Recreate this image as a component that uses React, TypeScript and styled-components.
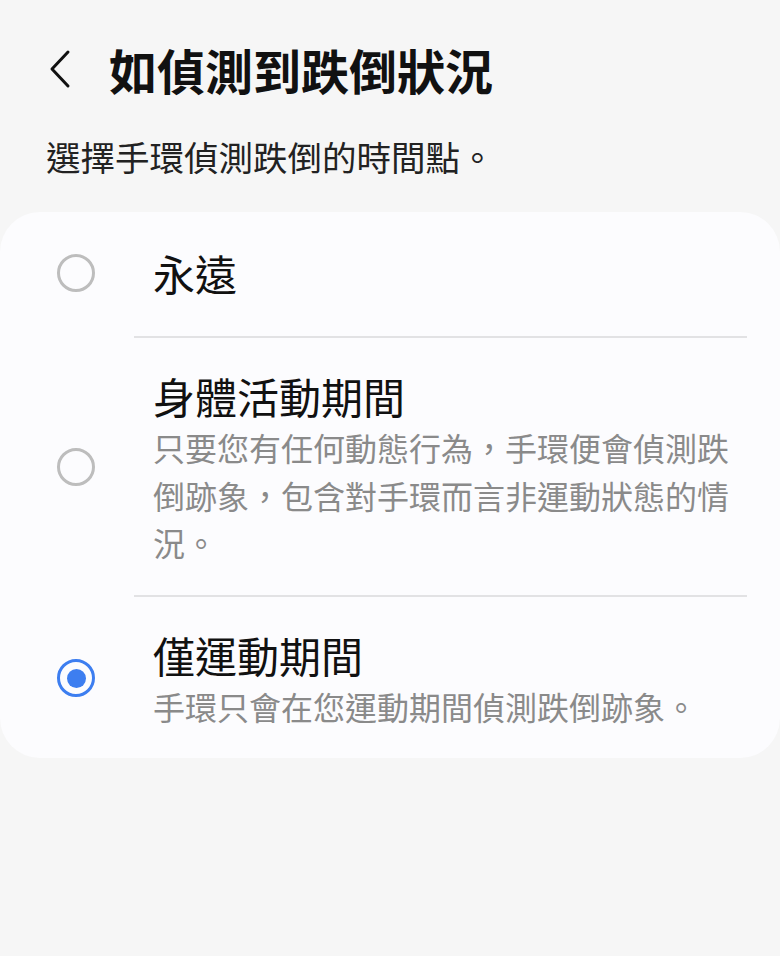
import styled, { createGlobalStyle } from "styled-components";

const GlobalStyle = createGlobalStyle`
  html, body {
    margin: 0;
    padding: 0;
    background: #f6f6f6;
  }
  body {
    font-family: "Noto Sans CJK TC", "Noto Sans", sans-serif;
    color: #111;
  }
`;

const options = [
  { title: "永遠", description: "", selected: false },
  {
    title: "身體活動期間",
    description:
      "只要您有任何動態行為，手環便會偵測跌倒跡象，包含對手環而言非運動狀態的情況。",
    selected: false,
  },
  {
    title: "僅運動期間",
    description: "手環只會在您運動期間偵測跌倒跡象。",
    selected: true,
  },
];

const Page = styled.div`
  min-height: 956px;
  background: #f6f6f6;
`;

const Header = styled.div`
  display: flex;
  align-items: center;
  gap: 37px;
  height: 60px;
  padding: 39px 0 0 48px;
`;

const BackButton = styled.div`
  display: flex;
  align-items: center;
  width: 24px;
  height: 40px;
`;

const Title = styled.h1`
  margin: 0;
  font-size: 48px;
  font-weight: 700;
  line-height: 60px;
  color: #111;
`;

const Subtitle = styled.p`
  margin: 33px 0 0;
  padding-left: 46px;
  font-size: 34.5px;
  line-height: 48px;
  color: #222;
`;

const Card = styled.div`
  margin-top: 32px;
  background: #fcfcfe;
  border-radius: 40px;
`;

const Row = styled.div<{ $single: boolean }>`
  display: flex;
  align-items: center;
  gap: 58px;
  padding: ${(p) => (p.$single ? "33px 33px 35px 57px" : "30px 33px 28px 57px")};
`;

const Radio = styled.div<{ $on: boolean }>`
  flex: none;
  box-sizing: border-box;
  width: 38px;
  height: 38px;
  border-radius: 50%;
  border: ${(p) => (p.$on ? "3.5px solid #3d7ef0" : "3px solid #bdbdbd")};
  display: flex;
  align-items: center;
  justify-content: center;

  &::after {
    content: "";
    display: ${(p) => (p.$on ? "block" : "none")};
    width: 19px;
    height: 19px;
    border-radius: 50%;
    background: #3d7ef0;
  }
`;

const TextBlock = styled.div`
  flex: 1;
  min-width: 0;
`;

const OptionTitle = styled.div`
  font-size: 42px;
  line-height: 56px;
  color: #111;
`;

const OptionDesc = styled.div`
  font-size: 32px;
  line-height: 47.5px;
  color: #8a8a8a;
`;

const Divider = styled.div`
  height: 2px;
  margin: 0 33px 0 134px;
  background: #e2e2e4;
`;

const ChevronLeft = () => (
  <svg width="24" height="40" viewBox="0 0 24 40" fill="none">
    <path
      d="M20 3 L4 20 L20 37"
      stroke="#111"
      strokeWidth="3"
      strokeLinecap="round"
      strokeLinejoin="round"
    />
  </svg>
);

export default function App() {
  return (
    <Page>
      <GlobalStyle />
      <Header>
        <BackButton>
          <ChevronLeft />
        </BackButton>
        <Title>如偵測到跌倒狀況</Title>
      </Header>
      <Subtitle>選擇手環偵測跌倒的時間點。</Subtitle>
      <Card>
        {options.map((item, index) => (
          <div key={index}>
            {index > 0 && <Divider />}
            <Row $single={!item.description}>
              <Radio $on={item.selected} />
              <TextBlock>
                <OptionTitle>{item.title}</OptionTitle>
                {item.description && (
                  <OptionDesc>{item.description}</OptionDesc>
                )}
              </TextBlock>
            </Row>
          </div>
        ))}
      </Card>
    </Page>
  );
}
